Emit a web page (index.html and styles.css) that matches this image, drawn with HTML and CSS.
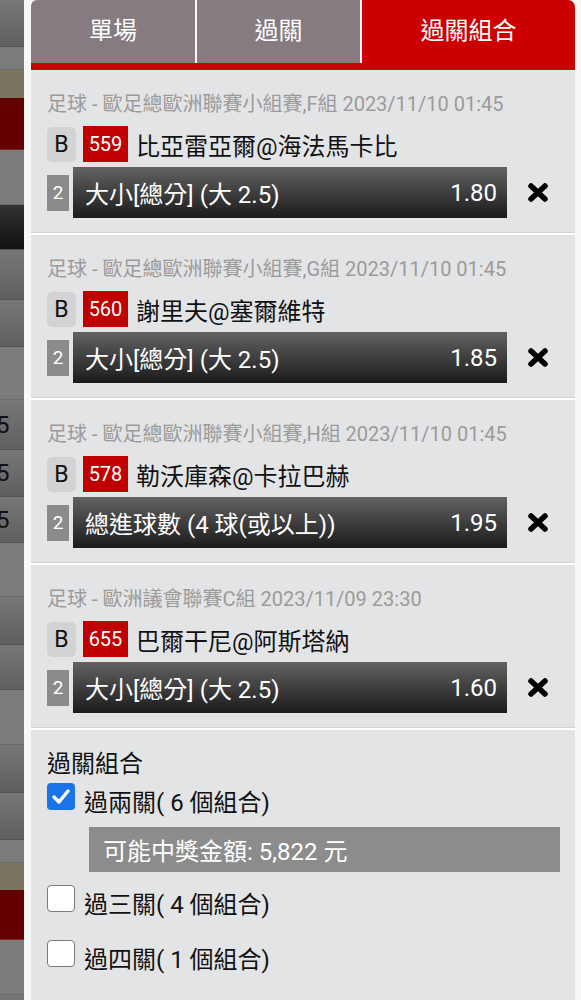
FILE: index.html
```html
<!DOCTYPE html>
<html lang="zh-Hant">
<head>
<meta charset="utf-8">
<title>過關組合</title>
<link rel="stylesheet" href="styles.css">
</head>
<body>
<div class="page">
  <div class="strip">
    <div class="r grad h47"></div>
    <div class="r flat h23"></div>
    <div class="r khaki h28"></div>
    <div class="r red h52"></div>
    <div class="r flat h55"></div>
    <div class="r dark h45"></div>
    <div class="r grad h50"></div>
    <div class="r grad h47"></div>
    <div class="r flat h53"></div>
    <div class="r grad h50"><span class="cut">5</span></div>
    <div class="r grad h47"><span class="cut">5</span></div>
    <div class="r grad h46"><span class="cut">5</span></div>
    <div class="r flat h54"></div>
    <div class="r grad h48"></div>
    <div class="r grad h45"></div>
    <div class="r flat h55"></div>
    <div class="r grad h48"></div>
    <div class="r grad h47"></div>
    <div class="r flat h23"></div>
    <div class="r khaki h27"></div>
    <div class="r red h50"></div>
    <div class="r flat h55"></div>
    <div class="r grad h47"></div>
  </div>

  <div class="panel">
    <div class="tabs">
      <div class="tab first">單場</div>
      <div class="tab">過關</div>
      <div class="tab active">過關組合</div>
    </div>

    <div class="card">
      <div class="league">足球 - 歐足總歐洲聯賽小組賽,F組 2023/11/10 01:45</div>
      <div class="match"><span class="b">B</span><span class="code">559</span><span class="team">比亞雷亞爾@海法馬卡比</span></div>
      <div class="betrow">
        <span class="num">2</span>
        <div class="bar"><span>大小[總分] (大 2.5)</span><span>1.80</span></div>
        <svg class="x" viewBox="0 0 22 21" width="22" height="21"><path d="M4 4 L18 17 M18 4 L4 17" stroke="#000" stroke-width="5.5" stroke-linecap="round"/></svg>
      </div>
    </div>

    <div class="card">
      <div class="league">足球 - 歐足總歐洲聯賽小組賽,G組 2023/11/10 01:45</div>
      <div class="match"><span class="b">B</span><span class="code">560</span><span class="team">謝里夫@塞爾維特</span></div>
      <div class="betrow">
        <span class="num">2</span>
        <div class="bar"><span>大小[總分] (大 2.5)</span><span>1.85</span></div>
        <svg class="x" viewBox="0 0 22 21" width="22" height="21"><path d="M4 4 L18 17 M18 4 L4 17" stroke="#000" stroke-width="5.5" stroke-linecap="round"/></svg>
      </div>
    </div>

    <div class="card">
      <div class="league">足球 - 歐足總歐洲聯賽小組賽,H組 2023/11/10 01:45</div>
      <div class="match"><span class="b">B</span><span class="code">578</span><span class="team">勒沃庫森@卡拉巴赫</span></div>
      <div class="betrow">
        <span class="num">2</span>
        <div class="bar"><span>總進球數 (4 球(或以上))</span><span>1.95</span></div>
        <svg class="x" viewBox="0 0 22 21" width="22" height="21"><path d="M4 4 L18 17 M18 4 L4 17" stroke="#000" stroke-width="5.5" stroke-linecap="round"/></svg>
      </div>
    </div>

    <div class="card">
      <div class="league">足球 - 歐洲議會聯賽C組 2023/11/09 23:30</div>
      <div class="match"><span class="b">B</span><span class="code">655</span><span class="team">巴爾干尼@阿斯塔納</span></div>
      <div class="betrow">
        <span class="num">2</span>
        <div class="bar"><span>大小[總分] (大 2.5)</span><span>1.60</span></div>
        <svg class="x" viewBox="0 0 22 21" width="22" height="21"><path d="M4 4 L18 17 M18 4 L4 17" stroke="#000" stroke-width="5.5" stroke-linecap="round"/></svg>
      </div>
    </div>

    <div class="combo">
      <div class="title">過關組合</div>
      <div class="opt first-opt">
        <span class="cb checked"><svg viewBox="0 0 28 27" width="28" height="27"><path d="M7 14 L12 19 L21 8" fill="none" stroke="#fff" stroke-width="3.5" stroke-linecap="round" stroke-linejoin="round"/></svg></span>
        <span class="lbl">過兩關( 6 個組合)</span>
      </div>
      <div class="amount">可能中獎金額: 5,822 元</div>
      <div class="opt second-opt">
        <span class="cb"></span>
        <span class="lbl">過三關( 4 個組合)</span>
      </div>
      <div class="opt third-opt">
        <span class="cb"></span>
        <span class="lbl">過四關( 1 個組合)</span>
      </div>
    </div>
  </div>
</div>
</body>
</html>
```

FILE: styles.css
```css
* { box-sizing: border-box; }

html, body {
  margin: 0;
  padding: 0;
  height: 1000px;
  overflow: hidden;
}

body {
  background: #f8f8f8;
  font-family: "Roboto", "Noto Sans CJK TC", sans-serif;
  color: #111;
}

.page {
  display: flex;
  align-items: flex-start;
  height: 1000px;
}

/* background page strip on the left */
.strip {
  width: 24px;
  flex: none;
  display: flex;
  flex-direction: column;
  overflow: hidden;
  height: 1000px;
}

.r {
  flex: none;
  width: 24px;
  overflow: hidden;
  display: flex;
  align-items: center;
}

.r.flat { background: #7b7b7b; border-bottom: 1px solid #6c6c6c; }
.r.grad { background: linear-gradient(#777, #5f5f5f); border-bottom: 1px solid #555; }
.r.khaki { background: #79755f; }
.r.red { background: #650000; border-bottom: 1px solid #7a2222; }
.r.dark { background: linear-gradient(#333, #111); border-bottom: 1px solid #555; }

.h23 { height: 23px; }
.h27 { height: 27px; }
.h28 { height: 28px; }
.h45 { height: 45px; }
.h46 { height: 46px; }
.h47 { height: 47px; }
.h48 { height: 48px; }
.h50 { height: 50px; }
.h52 { height: 52px; }
.h53 { height: 53px; }
.h54 { height: 54px; }
.h55 { height: 55px; }

.cut {
  font-size: 24px;
  color: #111;
  margin-left: -4px;
  line-height: 1;
}

/* panel */
.panel {
  margin-left: 7px;
  width: 544px;
  flex: none;
  background: #e3e4e6;
  height: 1000px;
}

.tabs {
  display: flex;
  gap: 2px;
  height: 70px;
  border-bottom: 7px solid #cc0000;
  background: #f8f8f8;
}

.tab {
  height: 63px;
  background: #857b80;
  color: #fff;
  font-size: 24px;
  display: flex;
  align-items: center;
  justify-content: center;
  width: 163px;
  flex: none;
  padding-bottom: 6px;
}

.tab.first {
  width: 164px;
  border-top-left-radius: 6px;
}

.tab.active {
  flex: 1;
  background: #cc0000;
  border-top-right-radius: 7px;
}

.card {
  height: 165px;
  padding: 21px 0 0 16px;
  border-bottom: 2px solid #fff;
  box-shadow: inset 0 -1px 0 #d2d3d5;
}

.league {
  font-size: 20px;
  line-height: 26px;
  color: #9b9b9b;
  white-space: nowrap;
}

.match {
  margin-top: 9px;
  height: 36px;
  display: flex;
  align-items: center;
}

.b {
  width: 29px;
  height: 35px;
  background: #d3d3d3;
  border-radius: 5px;
  display: flex;
  align-items: center;
  justify-content: center;
  font-size: 23px;
  color: #111;
}

.code {
  margin-left: 7px;
  width: 45px;
  height: 36px;
  background: #c00000;
  color: #fff;
  font-size: 20px;
  display: flex;
  align-items: center;
  justify-content: center;
}

.team {
  margin-left: 8px;
  font-size: 24px;
}

.betrow {
  margin-top: 5px;
  height: 51px;
  display: flex;
  align-items: center;
}

.num {
  width: 22px;
  height: 36px;
  background: #8b8b8b;
  color: #fff;
  font-size: 19px;
  display: flex;
  align-items: center;
  justify-content: center;
}

.bar {
  margin-left: 4px;
  width: 434px;
  height: 51px;
  background: linear-gradient(#626262, #1b1b1b);
  color: #fff;
  font-size: 24px;
  display: flex;
  align-items: center;
  justify-content: space-between;
  padding: 0 10px 0 12px;
}

.x {
  margin-left: 20px;
  flex: none;
}

/* combination section */
.combo {
  padding: 21px 15px 0 16px;
}

.title {
  font-size: 24px;
  line-height: 26px;
}

.opt {
  display: flex;
  align-items: flex-start;
  height: 34px;
}

.first-opt { margin-top: 6px; }
.second-opt { margin-top: 13px; }
.third-opt { margin-top: 21px; }

.cb {
  width: 28px;
  height: 27px;
  flex: none;
  border-radius: 4px;
  background: #fff;
  border: 1.5px solid #7a7a7a;
  display: flex;
}

.cb.checked {
  background: #1a73e8;
  border: none;
}

.lbl {
  margin-left: 9px;
  font-size: 24px;
  line-height: 40px;
}

.amount {
  margin: 10px 0 0 42px;
  height: 45px;
  background: #8c8c8c;
  color: #fff;
  font-size: 24px;
  display: flex;
  align-items: center;
  padding-left: 14px;
}
```
